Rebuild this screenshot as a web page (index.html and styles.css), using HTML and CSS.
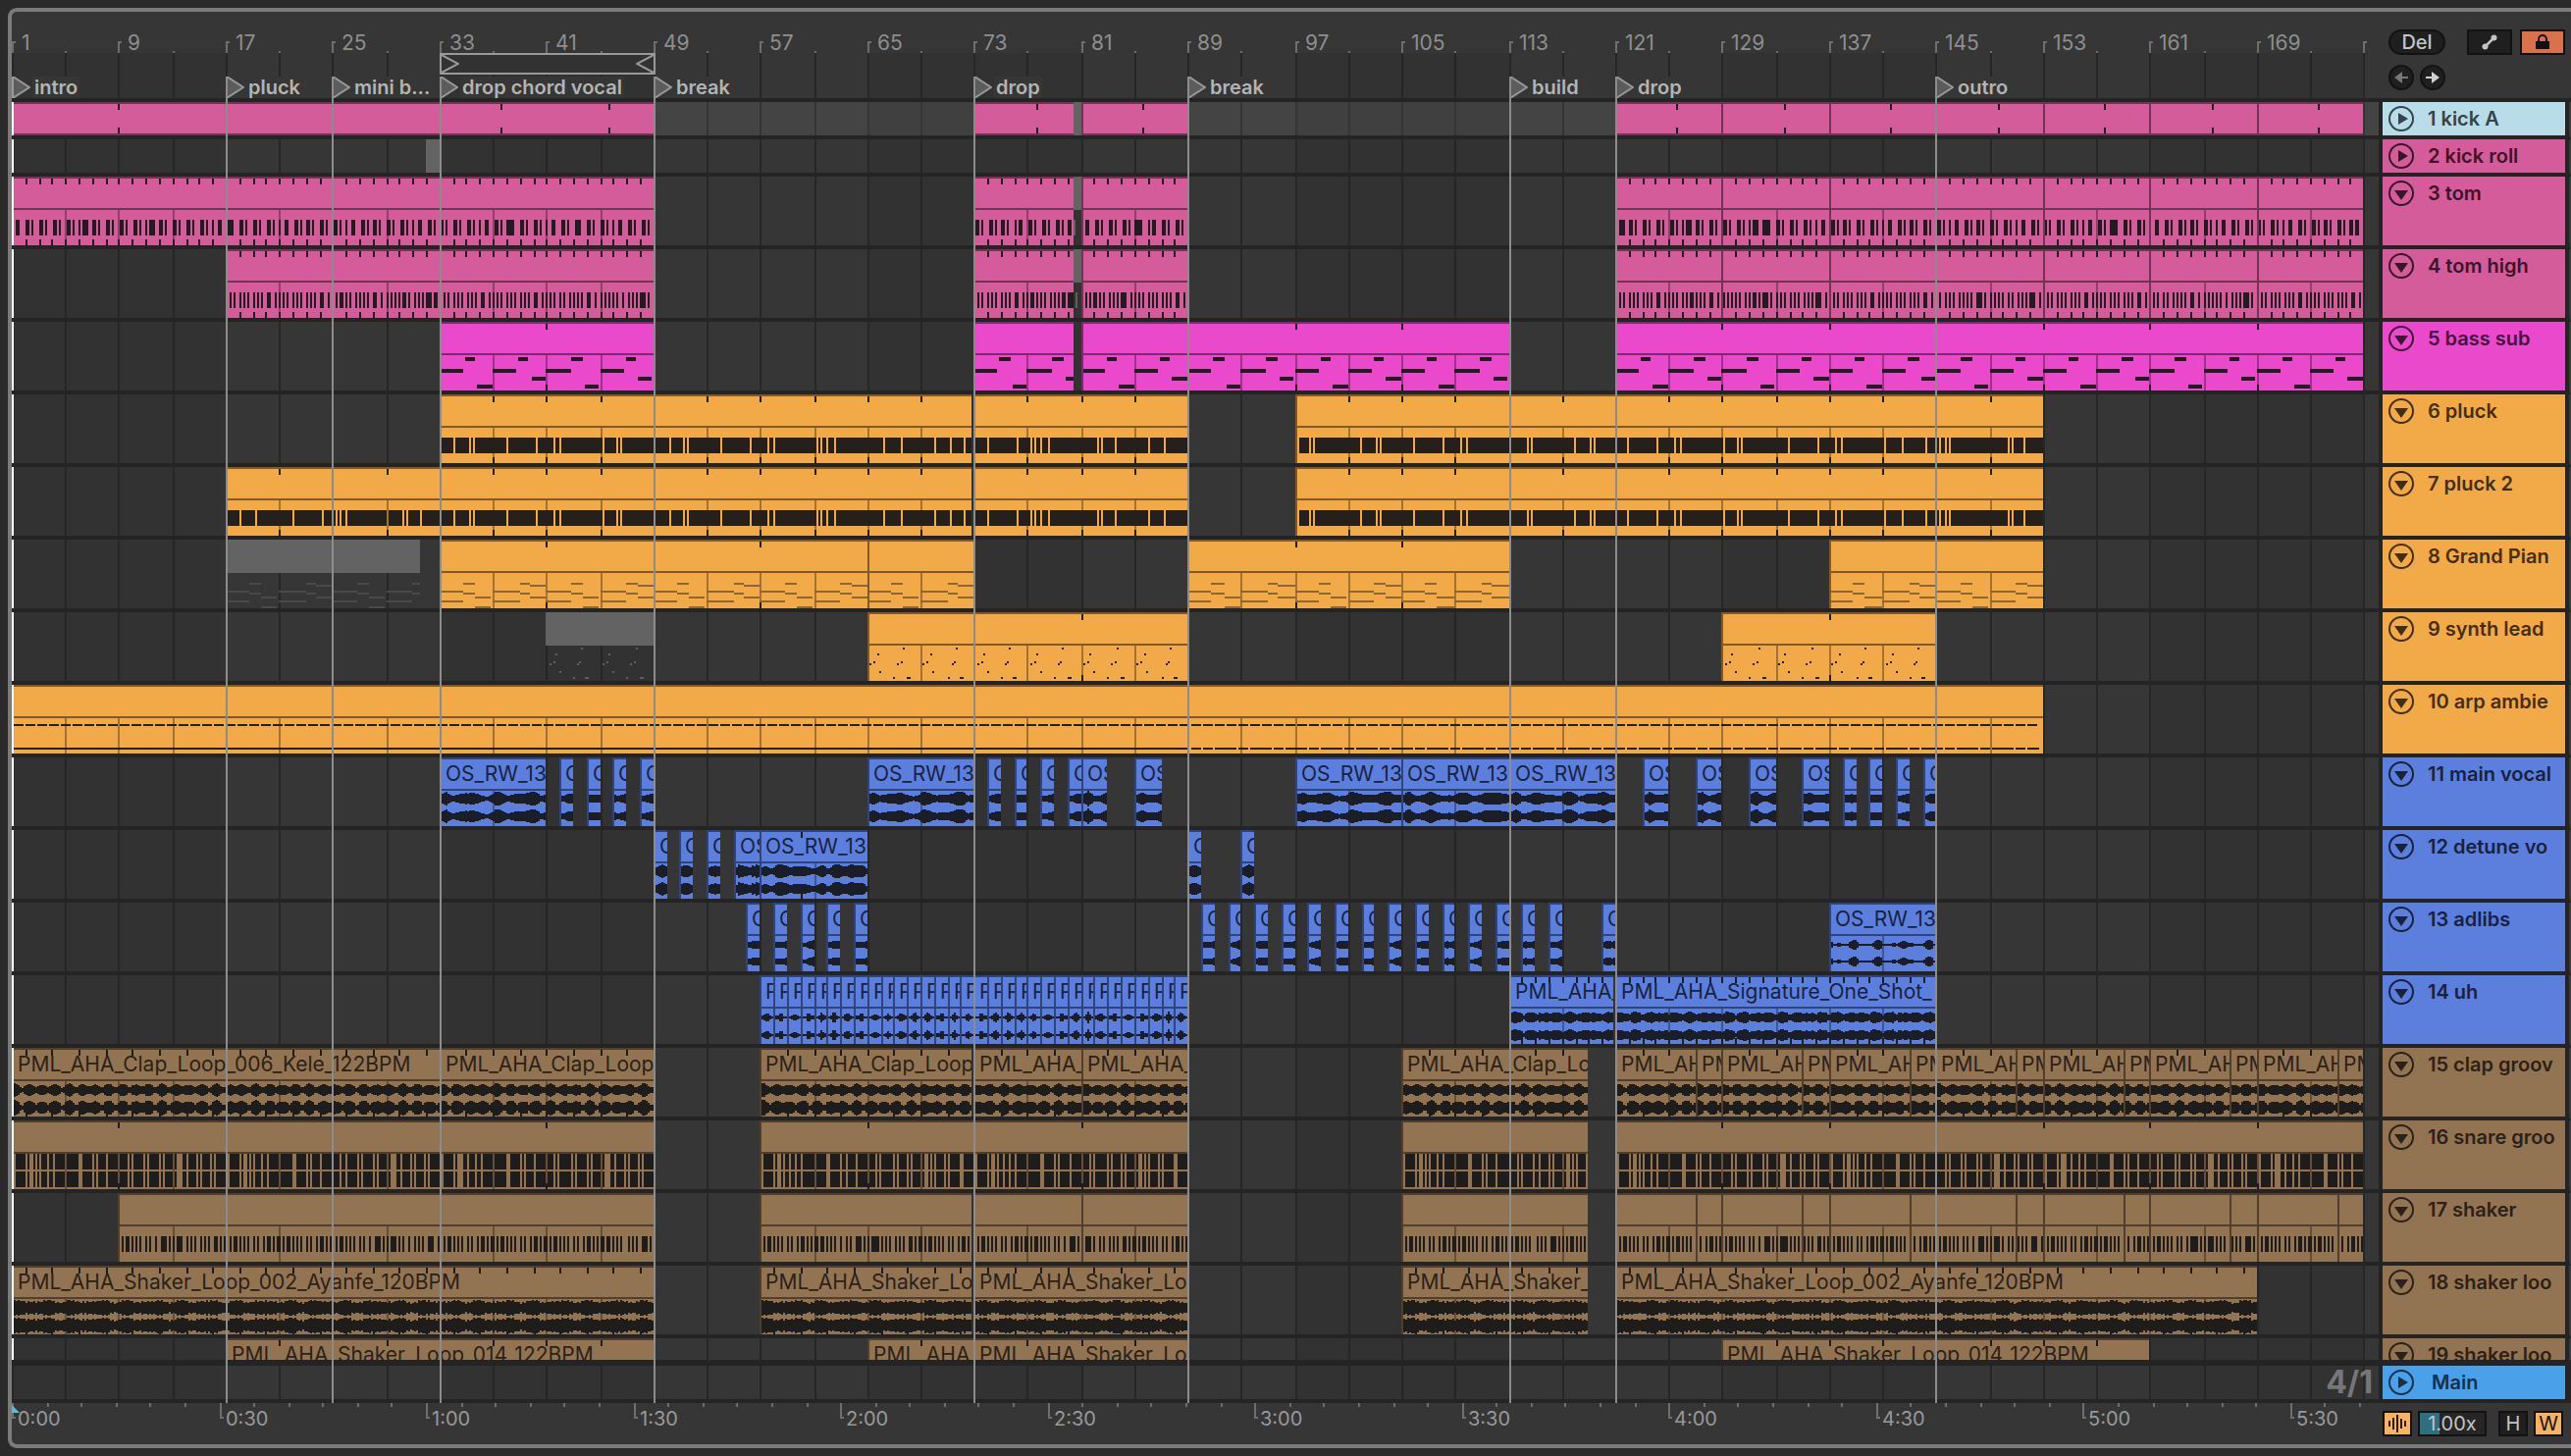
FILE: index.html
```
<!DOCTYPE html>
<html lang="en">
<head>
  <meta charset="UTF-8">
  <meta name="viewport" content="width=device-width, initial-scale=1.0">
  <title>Arrangement</title>
  <link rel="stylesheet" href="styles.css">
</head>
<body>
  <main class="frame">
    <section class="timeline" id="timeline">
      <svg class="grid" id="grid"></svg>
      <div class="ruler" id="ruler"></div>
      <div class="lanes" id="lanes"></div>
      <div class="main-lane"><span class="zoom-level">4/1</span></div>
      <div class="locator-lines" id="locator-lines"></div>
      <div class="time-ruler" id="time-ruler"></div>
    </section>

    <aside class="sidebar">
      <div class="tools">
        <div class="tools-row">
          <button class="pill">Del</button>
          <button class="tool automation" aria-label="Automation">
            <svg width="16" height="16" viewBox="0 0 16 16"><path d="M3.500 12.500L12.500 3.500" stroke="#c4c4c4" stroke-width="2.500"/><circle cx="3.500" cy="12.500" r="3" fill="#c4c4c4"/><circle cx="12.500" cy="3.500" r="3" fill="#c4c4c4"/></svg>
          </button>
          <button class="tool lock" aria-label="Lock envelopes">
            <svg width="14" height="16" viewBox="0 0 14 16"><path d="M3 8V5a4 4 0 0 1 8 0v3" fill="none" stroke="#111" stroke-width="2"/><path d="M0 7h14v8H0z" fill="#111"/></svg>
          </button>
        </div>
        <div class="tools-row arrows">
          <button class="round" aria-label="Previous locator">
            <svg width="14" height="14" viewBox="0 0 14 14"><path d="M0 7L8 1v5h6v2H8v5z" fill="#777"/></svg>
          </button>
          <button class="round" aria-label="Next locator">
            <svg width="14" height="14" viewBox="0 0 14 14"><path d="M14 7L6 1v5H0v2h6v5z" fill="#d0d0d0"/></svg>
          </button>
        </div>
      </div>
      <div class="headers" id="headers"></div>
      <div class="main-header">
        <div class="header azure">
          <button class="fold" aria-label="Unfold Main"><svg width="26" height="26" viewBox="0 0 26 26"><circle cx="13" cy="13" r="12"/><path d="M10 7l10 6-10 6z"/></svg></button>
          <span>Main</span>
        </div>
      </div>
      <div class="transport">
        <button class="small on" aria-label="Waveform">
          <svg width="18" height="18" viewBox="0 0 18 18"><path d="M1 6v6M5 3v12M9 0v18M13 4v10M17 6v6" stroke="#2a1c0a" stroke-width="2"/></svg>
        </button>
        <input class="speed" type="text" value="1.00x" aria-label="Zoom speed">
        <button class="small">H</button>
        <button class="small on">W</button>
      </div>
    </aside>
  </main>
  <script src="script.js"></script>
</body>
</html>
```
FILE: styles.css
```
* {
  box-sizing: border-box;
}

body {
  margin: 0;
  height: 100vh;
  padding: 8px 0 8px 8px;
  overflow: hidden;
  background: #2a2a2a;
  color: #999;
  font-family: Inter, "Liberation Sans", sans-serif;
  font-size: 20px;
}

button,
input {
  font: inherit;
  padding: 0;
  margin: 0;
}

svg {
  display: block;
}

.frame {
  display: flex;
  height: 100%;
  background: #363636;
  border: 4px solid #7b7b7b;
  border-right: 0;
  border-radius: 9px 0 0 9px;
  overflow: hidden;
}

.timeline {
  position: relative;
  flex: 1;
  min-width: 0;
  display: flex;
  flex-direction: column;
}

.grid {
  position: absolute;
  left: 0;
  top: 42px;
  width: 100%;
  height: calc(100% - 88px);
  shape-rendering: crispEdges;
}

.grid .band {
  fill: #323232;
}

.grid .line {
  fill: #262626;
}

/* beat ruler */
.ruler {
  position: relative;
  flex: 0 0 88px;
}

.tick {
  position: absolute;
  top: 40px;
  width: 2px;
  height: 2px;
  background: #6e6e6e;
}

.tick.major {
  top: 30px;
  width: 4px;
  height: 12px;
  background: none;
  border-left: 2px solid #6e6e6e;
  border-top: 2px solid #6e6e6e;
}

.bar-number {
  position: absolute;
  top: 20px;
  padding-left: 10px;
  font-size: 21px;
  line-height: 24px;
  color: #8e8e8e;
}

.loop {
  position: absolute;
  top: 42px;
  height: 22px;
  display: flex;
  justify-content: space-between;
  background: #323232;
  border: 2px solid #999;
}

.loop path {
  fill: none;
  stroke: #999;
  stroke-width: 2;
}

.locator {
  position: absolute;
  top: 66px;
  height: 22px;
  display: flex;
  align-items: center;
  gap: 2px;
  padding: 0;
  border: 0;
  background: none;
  color: #b4b4b4;
  font-weight: 600;
  line-height: 22px;
  white-space: nowrap;
}

.locator path {
  fill: #5c5c5c;
  stroke: #999;
  stroke-width: 2;
}

.locator span {
  padding: 0 2px;
  background: #363636;
}

.locator-lines {
  position: absolute;
  left: 0;
  top: 66px;
  width: 100%;
  height: calc(100% - 108px);
  pointer-events: none;
}

.locator-lines i {
  position: absolute;
  top: 0;
  width: 2px;
  height: 100%;
  background: #8c8c8c;
}

/* lanes */
.lanes {
  flex: 1;
  min-height: 0;
  overflow: hidden;
  position: relative;
  border-top: 4px solid #242424;
}

.lane {
  position: relative;
  height: 74px;
  border-bottom: 4px solid #242424;
}

.lane.folded {
  height: 38px;
}

.lane.selected {
  background: rgba(255, 255, 255, 0.07);
}

.lane::before {
  content: "";
  position: absolute;
  z-index: 2;
  left: 0;
  top: 0;
  width: 2px;
  height: 100%;
  background: #fff;
}

.main-lane {
  position: relative;
  flex: 0 0 44px;
  border-top: 6px solid #242424;
  border-bottom: 4px solid #242424;
  padding-right: 6px;
  text-align: right;
}

.zoom-level {
  font-size: 32px;
  font-weight: 700;
  line-height: 34px;
  color: #777;
}

.clip {
  position: absolute;
  top: 0;
  height: 100%;
  overflow: hidden;
  background: var(--color);
  border-top: 2px solid var(--edge);
  border-left: 2px solid var(--edge);
}

.clip .name {
  display: block;
  padding-left: 4px;
  font-size: 21px;
  line-height: 30px;
  white-space: nowrap;
  color: var(--ink);
}

.clip svg {
  position: absolute;
  left: -2px;
  top: -2px;
  shape-rendering: crispEdges;
}

.clip .seam {
  fill: var(--edge);
}

.clip .beat {
  fill: var(--edge);
  opacity: 0.7;
}

.clip .mark,
.clip .note {
  fill: var(--note);
}

.clip .soft {
  fill: var(--soft);
}

.muted {
  border: 0;
  background: linear-gradient(#636363 34px, transparent 34px);
}

.muted svg {
  left: 0;
  top: 0;
}

.muted .note {
  fill: #606060;
}

.muted .soft {
  fill: #494949;
}

.muted .seam,
.muted .beat,
.muted .mark {
  display: none;
}

.folded .clip {
  border-bottom: 2px solid var(--edge);
}

.folded .muted {
  border: 0;
}

/* track colours */
.sky {
  --color: #b8dde9;
  --ink: #33444a;
}

.pink {
  --color: #d55c9b;
  --edge: #743355;
  --ink: #3c1429;
  --note: #221b20;
}

.magenta {
  --color: #eb49cc;
  --edge: #80286f;
  --ink: #42103a;
  --note: #221b20;
}

.orange {
  --color: #f2a947;
  --edge: #825a27;
  --ink: #442e10;
  --note: #25201b;
  --soft: #906630;
}

.blue {
  --color: #5c7fde;
  --edge: #30447a;
  --ink: #17223f;
  --note: #1b1e27;
}

.brown {
  --color: #937452;
  --edge: #523e2c;
  --ink: #2b2118;
  --note: #1f1d1b;
}

.azure {
  --color: #4aa1e9;
  --ink: #14304a;
}

/* time ruler */
.time-ruler {
  position: relative;
  flex: 0 0 42px;
}

.time-tick {
  position: absolute;
  top: 0;
  width: 2px;
  height: 4px;
  background: #6e6e6e;
}

.time-tick.major {
  width: 4px;
  height: 16px;
  background: none;
  border-left: 2px solid #6e6e6e;
  border-bottom: 2px solid #6e6e6e;
}

.time {
  position: absolute;
  top: 4px;
  padding-left: 6px;
  line-height: 24px;
}

.start-marker {
  position: absolute;
  left: 0;
  top: 2px;
  fill: #56bfd3;
}

/* sidebar */
.sidebar {
  flex: 0 0 196px;
  display: flex;
  flex-direction: column;
}

.tools {
  flex: 0 0 88px;
  padding: 18px 6px 0 10px;
  display: flex;
  flex-direction: column;
  gap: 10px;
}

.tools-row {
  display: flex;
}

.arrows {
  gap: 6px;
}

.pill,
.round,
.tool,
.small,
.speed {
  height: 26px;
  display: flex;
  align-items: center;
  justify-content: center;
  background: #1f1f1f;
  border: 2px solid #121212;
  color: #c4c4c4;
}

.pill {
  width: 58px;
  border-radius: 13px;
  font-weight: 500;
  margin-right: auto;
}

.round {
  width: 26px;
  border-radius: 13px;
}

.tool {
  width: 46px;
  margin-left: 8px;
}

.lock {
  background: #d9714c;
}

.headers {
  flex: 1;
  min-height: 0;
  overflow: hidden;
  border-top: 4px solid #242424;
  border-left: 4px solid #242424;
}

.header {
  height: 70px;
  display: flex;
  align-items: flex-start;
  gap: 14px;
  padding: 4px 6px;
  overflow: hidden;
  background: var(--color);
  color: var(--ink);
  font-weight: 600;
  line-height: 26px;
  white-space: nowrap;
}

.header-row {
  padding-right: 4px;
  background: #242424;
  border-bottom: 4px solid #242424;
  border-right: 2px solid #3a3a3a;
}

.header.folded {
  height: 34px;
}

.fold {
  flex: none;
  background: none;
  border: 0;
}

.fold circle {
  fill: none;
  stroke: var(--ink);
  stroke-width: 2;
}

.fold path {
  fill: var(--ink);
}

.main-header {
  flex: 0 0 44px;
  padding-right: 6px;
  background: #242424;
  border-top: 6px solid #242424;
  border-left: 4px solid #242424;
}

.main-header .header {
  height: 34px;
  gap: 18px;
}

.transport {
  flex: 0 0 42px;
  display: flex;
  gap: 6px;
  padding: 8px 8px 0 4px;
}

.small {
  width: 30px;
}

.on {
  background: #f7b264;
  color: #1a1208;
}

.speed {
  width: 70px;
  margin-right: 6px;
  text-align: center;
  background: linear-gradient(90deg, #2f6f80 20px, #262626 20px);
}
```
FILE: script.js
```
const BARS = 177.13;
const BPM = 124;

const VOX = 'OS_RW_130_vocal';
const CLAP = 'PML_AHA_Clap_Loop_006_Kele_122BPM';
const SHAKER = 'PML_AHA_Shaker_Loop_002_Ayanfe_120BPM';
const SHAKER2 = 'PML_AHA_Shaker_Loop_014_122BPM';
const SHOT = 'PML_AHA_Signature_One_Shot_';

const locators = [
  [1, 'intro'], [17, 'pluck'], [25, 'mini b...'], [33, 'drop chord vocal'], [49, 'break'],
  [73, 'drop'], [89, 'break'], [113, 'build'], [121, 'drop'], [145, 'outro']
];

// clip edges of the last section, where long clips are cut 6 + 2 bars
const cuts = [];
for (let b = 121; b < 177; b += 8) {
  cuts.push([b, b + 6], [b + 6, b + 8]);
}
const eights = [];
for (let b = 121; b < 177; b += 8) eights.push([b, b + 8]);

// one bar long clips starting at each of the given bars
const oneBar = (list) => list.map((b) => [b, b + 1]);
const range = (from, to, step) => {
  const out = [];
  for (let b = from; b < to; b += step) out.push(b);
  return out;
};

// clips: [start, end, offset of the first loop mark]; tick: bars between loop marks
const tracks = [
  { name: '1 kick A', color: 'pink', head: 'sky', folded: true, selected: true, draw: 'none', tick: 8,
    clips: [[1, 33], [33, 49, 4.6], [73, 80.5, 4.6], [81, 89, 4.6], ...eights.map((c) => [...c, 4.6])], muted: [[80.5, 81]] },
  { name: '2 kick roll', color: 'pink', folded: true, draw: 'none', clips: [], muted: [[32, 33]] },
  { name: '3 tom', color: 'pink', draw: 'tom', tick: 1,
    clips: [[1, 49], [73, 80.5], [81, 89], ...eights], muted: [[80.5, 81]] },
  { name: '4 tom high', color: 'pink', draw: 'tomHigh', tick: 1,
    clips: [[17, 49], [73, 80.5], [81, 89], ...eights], muted: [[80.5, 81]] },
  { name: '5 bass sub', color: 'magenta', draw: 'bass', tick: 8, clips: [[33, 49], [73, 80.5], [81, 113], [121, 177]] },
  { name: '6 pluck', color: 'orange', draw: 'pluck', tick: 4, clips: [[33, 72.8], [73, 89], [97, 153]] },
  { name: '7 pluck 2', color: 'orange', draw: 'pluck', tick: 4, clips: [[17, 33], [33, 72.8], [73, 89], [97, 153]] },
  { name: '8 Grand Pian', color: 'orange', draw: 'piano', tick: 8,
    clips: [[33, 65], [65, 73], [89, 113], [137, 153]], muted: [[17, 31.5]] },
  { name: '9 synth lead', color: 'orange', draw: 'lead', tick: 8, clips: [[65, 89], [129, 145]], muted: [[41, 49]] },
  { name: '10 arp ambie', color: 'orange', draw: 'arp', clips: [[1, 153]] },
  { name: '11 main vocal', color: 'blue', draw: 'vox', label: VOX,
    clips: [[33, 41], ...oneBar([42, 44, 46, 48]), [65, 73], ...oneBar([74, 76, 78, 80]), [81, 83], [85, 87],
      [97, 105], [105, 113], [113, 121], [123, 125], [127, 129], [131, 133], [135, 137], ...oneBar([138, 140, 142, 144])] },
  { name: '12 detune vo', color: 'blue', draw: 'detune', label: VOX,
    clips: [...oneBar([49, 51, 53]), [55, 57], [57, 65, 3], ...oneBar([89, 93])], tick: 8 },
  { name: '13 adlibs', color: 'blue', draw: 'adlib', label: VOX,
    clips: [...oneBar(range(56, 65, 2)), ...oneBar(range(90, 117, 2)), [120, 121], [137, 145]] },
  { name: '14 uh', color: 'blue', draw: 'shot', label: SHOT, tick: 1,
    clips: [...oneBar(range(57, 89, 1)), [113, 120.8], [121, 145]] },
  { name: '15 clap groov', color: 'brown', draw: 'clap', label: CLAP, tick: 2,
    clips: [[1, 33, 1], [33, 49], [57, 72.8], [73, 81], [81, 89], [105, 119], ...cuts] },
  { name: '16 snare groo', color: 'brown', draw: 'snare', tick: 8, clips: [[1, 49], [57, 73], [73, 89], [105, 119], [121, 177]] },
  { name: '17 shaker', color: 'brown', draw: 'shaker', clips: [[9, 49], [57, 72.8], [73, 81], [81, 89], [105, 119], ...cuts] },
  { name: '18 shaker loo', color: 'brown', draw: 'loop', label: SHAKER, tick: 2,
    clips: [[1, 49, 1], [57, 72.8, 1], [73, 89, 1], [105, 119, 1], [121, 169, 1]] },
  { name: '19 shaker loo', color: 'brown', draw: 'loop', label: SHAKER2, tick: 4, clips: [[17, 49], [65, 73], [73, 89], [129, 161]] }
];

let width = 0;

// bar number to x, on a two pixel grid
function x(bar) {
  return 2 * Math.round((bar - 1) * width / BARS / 2);
}

function rect(l, t, w, h) {
  return `M${l} ${t}h${w}v${h}h${-w}z`;
}

// rectangle between two bars, relative to the clip's left edge
function note(clip, from, to, top, height) {
  const a = Math.max(x(from), x(clip[0]));
  const b = Math.min(Math.max(x(to), x(from) + 2), x(clip[1]));
  return b > a ? rect(a - x(clip[0]), top, b - a, height) : '';
}

function each(clip, step, fn) {
  let out = '';
  for (let b = 1 + Math.floor((clip[0] - 1) / step) * step; b < clip[1]; b += step) out += fn(b);
  return out;
}

const TOM_HIGH = [0, 0.3, 0.6, 1, 1.3, 1.65, 2.05, 2.35, 2.65, 3.05, -3.05, 3.65];
// rests in the pluck band, by the bar the phrase starts at
const PLUCK = {
  17: [1, 2.15, 4.95, 7.15, 8.2, 8.5, 8.95, 12.1, 13.2, 13.5, 14.5],
  33: [1, 2.2, 2.5, 5, 7.2, 8.5, 9, 12.2, 13.3, 13.55, 17.2, 18.2, 18.5, 21, 23.2, 24.5, 25, 28.2, 28.5,
    28.95, 29.5, 33.2, 34.5, 37, 38.2, 39.3, 41, 43.2, 44.2, 44.5, 44.95, 45.5, 49.2, 49.5, 50.5, 53, 54.2],
  97: [0.15, 1.1, 1.4, 4.9, 6.1, 6.4, 8.9, 11.1, 12.4, 12.9, 16.1, 17.4, 17.7, 20.9, 22.1, 22.4, 24.9, 27.1, 28.4,
    28.9, 32.1, 33.1, 33.4, 36.9, 39.1, 40.4, 40.9, 44.1, 45.4, 47.2, 48.3, 48.6, 49, 53.3, 53.6, 54.6]
};
const SNARE = [0, 0.15, 1.05, 1.3, 1.5, 1.7, 2.1, 2.65, 3.1, 4, 5, 5.15, 6.05, 6.35, 7.1, 8, 8.6, 8.9, 9.9, 10.2, 11,
  11.3, 12, 12.3, 12.5, 12.7, 13.1, 13.8, 14.1, 14.9, 15.1];
const SHAKES = [[0, 0], [0.28, 0], [0.55, 0.3], [1, 0], [1.3, 0], [1.6, 0], [2.05, 0], [2.35, 0], [2.75, 0.15],
  [3.1, 0.3], [3.5, 0], [3.8, 0]];
const PIANO = [[0, 1.8, 52], [0, 1.8, 62], [1.8, 2.7, 44], [1.8, 2.7, 54], [2.7, 3.9, 58], [2.7, 3.9, 68],
  [4, 6, 52], [4, 6, 62], [6, 6.8, 44], [6.8, 8, 46], [6, 6.8, 54], [6.8, 8, 58]];

const notes = {
  none: () => '',
  tom: (c) => each(c, 1, (b) => (b - 1) % 5 === 0
    ? note(c, b, b + 0.15, 44, 16) + note(c, b + 0.35, b + 0.66, 44, 16)
    : note(c, b + 0.08, b + 0.38, 44, 16) + note(c, b + 0.52, b + 0.66, 44, 16)),
  tomHigh: (c) => each(c, 4, (b) => TOM_HIGH.map((o) => o < 0
    ? note(c, b - o, b - o + 0.34, 44, 16)
    : note(c, b + o, b + o + 0.15, 44, 16)).join('')),
  bass: (c) => each(c, 8, (b) => [0, 4].map((o) => note(c, b + o, b + o + 1.8, 48, 4)
    + note(c, b + o + 1.9, b + o + 2.7, 36, 4)
    + note(c, b + o + 2.85, b + o + 3.95, o ? 56 : 64, 4)).join('')),
  pluck: (c) => {
    const base = c[0] === 73 ? 33 : c[0];
    const rests = PLUCK[base].map((o) => x(base + o)).filter((p) => p > x(c[0]) && p < x(c[1]) - 2);
    let out = '';
    let from = x(c[0]);
    for (const p of [...rests, x(c[1])]) {
      out += rect(from - x(c[0]), 44, p - from, 16);
      from = p + 2;
    }
    return out;
  },
  lead: (c) => each(c, 4, (b) => [[0.2, 52], [0.5, 50], [0.7, 42], [0.95, 60], [2, 66], [2.3, 52], [2.5, 50],
    [2.65, 36], [2.95, 66], [3.1, 66]].map(([o, y]) => note(c, b + o, b + o + 0.1, y, 2)).join('')),
  arp: (c) => {
    const w = x(c[1]) - x(c[0]);
    const turn = x(89) - x(c[0]);
    let out = rect(0, 64, turn, 2);
    for (let p = 2; p < w - 10; p += 12) {
      out += rect(p, 40, 10, 2);
      if (p > turn) out += rect(p, 64, p % 36 === 2 ? 12 : 10, 2);
    }
    return out;
  },
  snare: (c) => {
    let out = '';
    const stops = [];
    for (let b = c[0]; b < c[1]; b += 16) SNARE.forEach((o) => stops.push(x(b + o)));
    let from = x(c[0]);
    for (const p of [...stops.filter((s) => s < x(c[1])), x(c[1])]) {
      if (p > from) out += rect(from - x(c[0]), 34, p - from, 16) + rect(from - x(c[0]), 52, p - from, 16);
      from = Math.max(from, p + 2);
    }
    return out;
  },
  shaker: (c) => each(c, 4, (b) => SHAKES.map(([o, w]) => note(c, b + o, b + o + w, 44, 16)).join('')),
  vox: (c) => wave(c, 42, 60, 7, (t, n) => n < 1.5
    ? 3 + 2 * t
    : curve([4, 7, 3, 4, 6, 6, 4, 3, 3, 7, 6, 3, 4, 5, 6, 7, 4, 4], t * n / 8)),
  detune: (c) => wave(c, 42, 60, 7, (t, n) => n < 1.5
    ? 3 + 3 * Math.sin(t * 3)
    : curve([3, 5, 3, 7, 6, 5, 5, 4, 5, 4, 3, 6, 3, 7, 6, 5, 7, 5, 6, 3], t)),
  adlib: (c) => wave(c, 43, 60, 5, (t, n) => n < 1.5
    ? 2.5 + 2 * t
    : Math.max(1, 5 * Math.sin((t - 0.16) * 26.5))),
  shot: (c) => wave(c, 43, 61, 5, (t, n) => n < 1.5
    ? Math.max(1, 5 - Math.abs(t - 0.5) * 14)
    : 5 - 2 * Math.pow(Math.abs(Math.cos(t * n * Math.PI)), 10)),
  clap: (c) => wave(c, 43, 61, 6, (t, n) => 6 - 3 * Math.pow(Math.abs(Math.cos((t * n + 0.3) * Math.PI)), 3), 1.15),
  loop: (c) => wave(c, 43, 61, 7, (t, n) => 6.5 + Math.sin(t * n * 3.1) + 0.8 * Math.sin(t * n * 17))
};

function curve(points, t) {
  const p = Math.min(t, 0.999) * (points.length - 1);
  const i = Math.floor(p);
  return points[i] + (points[i + 1] - points[i]) * (p - i);
}

// two mirrored channels
function wave(clip, y1, y2, max, level, lower = 1) {
  const w = x(clip[1]) - x(clip[0]);
  const bars = clip[1] - clip[0];
  let out = '';
  for (let p = 0; p < w; p += 2) {
    const rough = Math.sin(p * 12.9 + clip[0]) * 0.6;
    const h = Math.max(1, Math.round(Math.min(max + 1, level(p / w, bars) + rough)));
    const h2 = Math.max(1, Math.round(h * lower));
    out += rect(p, y1 - h, 2, h * 2) + rect(p, y2 - h2, 2, h2 * 2);
  }
  return out;
}

function clipSvg(track, clip) {
  const w = x(clip[1]) - x(clip[0]);
  const h = track.folded ? 34 : 70;
  let beats = '';
  let marks = '';
  if (!track.folded) {
    for (const b of range(1, BARS, 4)) {
      if (b > clip[0] && b < clip[1]) beats += rect(x(b) - x(clip[0]), 34, 2, h - 34);
    }
  }
  if (track.tick) {
    const first = clip[0] + (clip[2] || track.tick);
    for (const b of range(first, clip[1] - 0.1, track.tick)) {
      marks += rect(x(b) - x(clip[0]), 2, 2, 6) + rect(x(b) - x(clip[0]), h - (track.folded ? 8 : 6), 2, 6);
    }
  }
  const soft = track.draw === 'piano'
    ? each(clip, 8, (b) => PIANO.map(([s, e, y]) => note(clip, b + s, b + e, y, 2)).join(''))
    : '';
  const body = soft ? '' : notes[track.draw](clip);
  const seam = track.folded ? '' : rect(0, 32, w, 2);
  return `<svg width="${w}" height="${h}"><path class="seam" d="${seam}"/><path class="beat" d="${beats}"/>`
    + `<path class="soft" d="${soft}"/><path class="note" d="${body}"/><path class="mark" d="${marks}"/></svg>`;
}

function clipHtml(track, clip, muted) {
  const w = x(clip[1]) - x(clip[0]);
  // only as many letters as the clip has room for
  const label = track.label && !muted
    ? `<span class="name">${track.label.slice(0, Math.ceil(w / 12.5))}</span>`
    : '';
  return `<div class="clip ${muted ? 'muted' : ''}" style="left:${x(clip[0])}px;width:${w}px">`
    + label + clipSvg(track, clip) + '</div>';
}

function drawLanes() {
  document.getElementById('lanes').innerHTML = tracks.map((t) =>
    `<div class="lane ${t.color} ${t.folded ? 'folded' : ''} ${t.selected ? 'selected' : ''}">`
    + t.clips.map((c) => clipHtml(t, c, false)).join('')
    + (t.muted || []).map((c) => clipHtml(t, c, true)).join('')
    + '</div>').join('');
}

function drawGrid() {
  let bands = '';
  let lines = '';
  for (const b of range(1, BARS, 32)) bands += rect(x(b), 0, x(Math.min(b + 16, 177)) - x(b), 1400);
  for (const b of range(1, BARS, 4)) lines += rect(x(b), 0, 2, 1400);
  document.getElementById('grid').innerHTML = `<path class="band" d="${bands}"/><path class="line" d="${lines}"/>`;
}

function drawRuler() {
  let html = '';
  for (const b of range(1, 178, 4)) {
    const major = (b - 1) % 8 === 0;
    html += `<i class="tick ${major ? 'major' : ''}" style="left:${x(b)}px"></i>`;
    if (major && b < 177) html += `<span class="bar-number" style="left:${x(b)}px">${b}</span>`;
  }
  html += `<div class="loop" style="left:${x(33)}px;width:${x(49) + 2 - x(33)}px">`
    + '<svg width="18" height="18" viewBox="0 0 18 18"><path d="M0 0L17 9L0 18"/></svg>'
    + '<svg width="18" height="18" viewBox="0 0 18 18"><path d="M18 0L1 9L18 18"/></svg></div>';
  for (const [b, name] of locators) {
    html += `<button class="locator" style="left:${x(b)}px">`
      + `<svg width="19" height="22" viewBox="0 0 19 22"><path d="M1 0L18 11L1 22z"/></svg><span>${name}</span></button>`;
  }
  document.getElementById('ruler').innerHTML = html;
  document.getElementById('locator-lines').innerHTML = locators.slice(1)
    .map(([b]) => `<i style="left:${x(b)}px"></i>`).join('');
}

function drawTime() {
  let html = '';
  for (let s = 0; s < 342; s += 5) {
    const left = x(1 + s * BPM / 240);
    html += `<i class="time-tick ${s % 30 ? '' : 'major'}" style="left:${left}px"></i>`;
    if (s % 30 === 0) {
      html += `<span class="time" style="left:${left}px">${Math.floor(s / 60)}:${s % 60 ? '30' : '00'}</span>`;
    }
  }
  html += '<svg class="start-marker" width="8" height="8" viewBox="0 0 8 8"><path d="M0 0l8 8H0z"/></svg>';
  document.getElementById('time-ruler').innerHTML = html;
}

function drawHeaders() {
  document.getElementById('headers').innerHTML = tracks.map((t) => {
    const arrow = t.folded ? 'M10 7l10 6-10 6z' : 'M6 10h14l-7 10z';
    return `<div class="header-row"><div class="header ${t.head || t.color} ${t.folded ? 'folded' : ''}">`
      + `<button class="fold" aria-label="Fold ${t.name}"><svg width="26" height="26" viewBox="0 0 26 26">`
      + `<circle cx="13" cy="13" r="12"/><path d="${arrow}"/></svg></button><span>${t.name}</span></div></div>`;
  }).join('');
}

function draw() {
  width = document.getElementById('timeline').clientWidth;
  drawGrid();
  drawRuler();
  drawLanes();
  drawTime();
}

drawHeaders();
draw();
window.addEventListener('resize', draw);
```
